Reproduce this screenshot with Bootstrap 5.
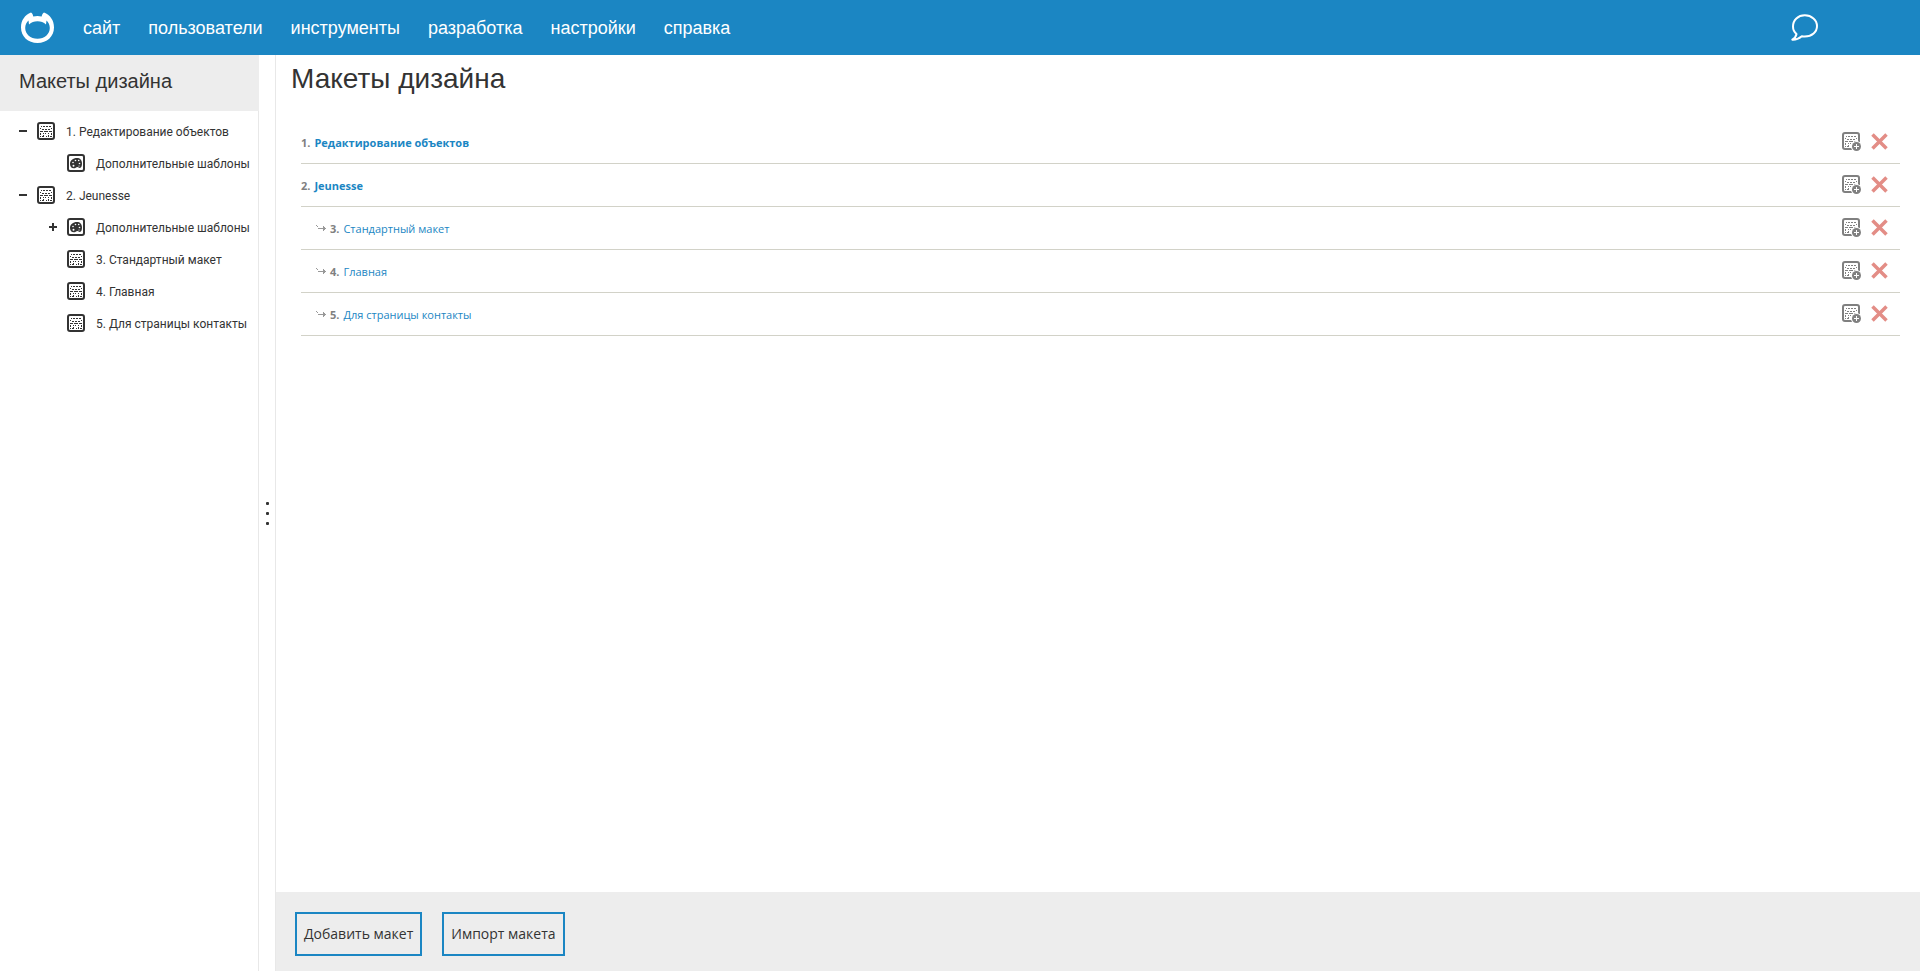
<!DOCTYPE html>
<html lang="ru">
<head>
<meta charset="utf-8">
<meta name="viewport" content="width=device-width, initial-scale=1">
<title>Макеты дизайна</title>
<link rel="stylesheet" href="https://cdn.jsdelivr.net/npm/bootstrap@5.3.0/dist/css/bootstrap.min.css">
<style>
  :root { --brand: #1b86c3; --ink: #333; --panel: #ededed; }
  body { font-family: "Liberation Sans", Arial, sans-serif; color: var(--ink); }
  a { text-decoration: none; }
  svg { display: block; flex-shrink: 0; }
  .topbar { background: var(--brand); height: 55px; padding: 0 101px 0 20px; }
  .topbar .nav { gap: 28px; margin-left: 28px; }
  .topbar .nav-link { color: #fff; font-size: 18px; line-height: 24px; padding: 0; }
  .side { width: 259px; border-right: 1px solid #e8e8e8; }
  .side-title { background: var(--panel); height: 56px; margin-right: -1px; padding: 14px 19px; font-size: 20px; line-height: 24px; }
  .tree { padding-top: 4px; font-family: Roboto, sans-serif; font-size: 12px; line-height: 16px; }
  .tree .node { height: 32px; padding-left: 19px; white-space: nowrap; }
  .tree ul .node { padding-left: 49px; }
  .tree a { color: var(--ink); gap: 11px; }
  .tree a span { padding-top: 1px; }
  .toggle { width: 18px; height: 18px; flex-shrink: 0; padding: 0; border: 0; background: none; color: var(--ink); }
  .splitter { width: 17px; border-right: 1px solid #e8e8e8; gap: 7px; }
  .splitter span { width: 3px; height: 3px; border-radius: 1px; background: var(--ink); }
  .page-title { font-size: 28px; line-height: 32px; padding: 8px 15px 0; margin: 0 0 26px; }
  .layouts { margin: 0 20px 0 25px; font-family: "Open Sans", sans-serif; font-size: 11px; line-height: 16px; }
  .layouts li { height: 43px; border-bottom: 1px solid #d2d2c8; padding-right: 12px; }
  .layouts a { color: var(--brand); padding-top: 2px; }
  .layouts .num { color: #808080; font-weight: 700; padding-top: 2px; }
  .layouts .top-level a { font-weight: 700; }
  .layouts .child { padding-left: 15px; }
  .tool { padding: 0 0 1px; border: 0; background: none; }
  .tool-add { margin: 0 6px 0 auto; }
  .actions { background: var(--panel); height: 79px; gap: 20px; padding: 20px 19px 0; }
  .actions .btn { height: 44px; border: 2px solid var(--brand); border-radius: 0; padding: 0 7px; color: var(--ink); font-family: "Open Sans", sans-serif; font-size: 14px; line-height: 20px; }
</style>
</head>
<body class="vh-100 d-flex flex-column">

<svg width="0" height="0" class="position-absolute" aria-hidden="true">
  <symbol id="i-layout" viewBox="0 0 18 18">
    <rect x="1" y="1" width="16" height="16" rx="2" fill="none" stroke="currentColor" stroke-width="2"/>
    <path d="M4 4.500h1M6 4.500h2M9 4.500h2M12 4.500h2M3 6.500h1M5 7.500h2M8 7.500h2M11 7.500h2M14 6.500h1M3 9.500h3M7 9.500h4M12 9.500h3M3.500 11v2M3.500 14v1M6.500 11v1M6.500 13v2M8.500 11v1M11.500 11v1M11.500 13v2M14.500 11v2M14.500 14v1M5 14.500h1M9 14.500h1M13 14.500h1" fill="none" stroke="currentColor" shape-rendering="crispEdges"/>
  </symbol>
  <symbol id="i-palette" viewBox="0 0 18 18">
    <rect x="1" y="1" width="16" height="16" rx="2" fill="none" stroke="currentColor" stroke-width="2"/>
    <path d="M10 4C6 4 3 6.500 3 10c0 3 2 4.500 4.500 4.200 1.500-.2 1.500-1.200 3-1.200 1 0 1.300 1 2.300 1C14.500 14 15 11.500 15 9.500 15 6 13 4 10 4z" fill="currentColor"/>
    <g fill="#fff"><circle cx="6" cy="8.500" r=".8"/><circle cx="8.500" cy="6.500" r=".8"/><circle cx="11.700" cy="6.500" r=".8"/><circle cx="12.500" cy="9.500" r=".8"/><circle cx="6.500" cy="11.700" r="1"/><circle cx="12" cy="12" r=".6"/></g>
  </symbol>
  <symbol id="i-minus" viewBox="0 0 18 18"><path d="M0 8h8v2H0z" fill="currentColor"/></symbol>
  <symbol id="i-plus" viewBox="0 0 18 18"><path d="M0 8h3V5h2v3h3v2H5v3H3v-3H0z" fill="currentColor"/></symbol>
  <symbol id="i-add" viewBox="0 0 19 19">
    <g color="#808080">
      <use href="#i-layout" width="18" height="18"/>
      <circle cx="14.500" cy="14.500" r="5.500" fill="#fff"/>
      <circle cx="14.500" cy="14.500" r="4.500" fill="#808080"/>
      <path d="M14.500 12v5M12 14.500h5" stroke="#fff" fill="none"/>
    </g>
  </symbol>
  <symbol id="i-del" viewBox="0 0 17 17"><path d="M1.500 1.500l14 14M15.500 1.500l-14 14" stroke="#e38d86" stroke-width="3.500" fill="none"/></symbol>
  <symbol id="i-child" viewBox="0 0 10 6"><path d="M0 .5h1M1 1.500h1M2 3.500h8M7.500 1v5M8.500 2v3" stroke="#999" fill="none"/></symbol>
</svg>

<header class="topbar d-flex align-items-center">
  <a href="#" aria-label="Главная">
    <svg width="35" height="32" viewBox="0 0 35 32"><path d="M11 .5C12.500 1.500 13 3 13.300 4.500 16 3.800 19 3.800 21.600 4.500 22 3 22.500 1.500 24 .5 30 3 34 8 34 15.500 34 24.500 27 31 17.500 31S1 24.500 1 15.500C1 8 5 3 11 .5z" fill="#fff"/><path d="M8.500 8.500C6.500 10.300 5.200 13 5.200 16 5.200 22 10.500 26.800 17.500 26.800S29.800 22 29.800 16C29.800 13 28.500 10.300 26.500 8.500L26 12.500C23.500 10 21 9.300 17.500 9.300S11.500 10 9 12.500z" fill="#1b86c3"/></svg>
  </a>
  <nav class="nav flex-nowrap">
    <a class="nav-link" href="#">сайт</a>
    <a class="nav-link" href="#">пользователи</a>
    <a class="nav-link" href="#">инструменты</a>
    <a class="nav-link" href="#">разработка</a>
    <a class="nav-link" href="#">настройки</a>
    <a class="nav-link" href="#">справка</a>
  </nav>
  <a class="ms-auto" href="#" aria-label="Сообщения">
    <svg width="28" height="28" viewBox="0 0 28 28"><path d="M5.500 20C3 18 2 15.500 2 12.500 2 6 7 1.300 13.800 1.300S26 6 26 12 21 22.500 13.800 22.500c-1 0-2 0-3-.3C8 24.500 5 26 1.300 25.700 3.500 24.500 5 22.500 5.500 20z" fill="none" stroke="#fff" stroke-width="2" stroke-linejoin="round"/></svg>
  </a>
</header>

<div class="d-flex flex-grow-1">
  <aside class="side flex-shrink-0">
    <div class="side-title">Макеты дизайна</div>
    <ul class="tree list-unstyled m-0">
      <li>
        <div class="node d-flex align-items-center"><button class="toggle" type="button" aria-label="Свернуть"><svg width="18" height="18"><use href="#i-minus"/></svg></button><a class="d-flex align-items-center" href="#"><svg width="18" height="18"><use href="#i-layout"/></svg><span>1. Редактирование объектов</span></a></div>
        <ul class="list-unstyled">
          <li class="node d-flex align-items-center"><span class="toggle"></span><a class="d-flex align-items-center" href="#"><svg width="18" height="18"><use href="#i-palette"/></svg><span>Дополнительные шаблоны</span></a></li>
        </ul>
      </li>
      <li>
        <div class="node d-flex align-items-center"><button class="toggle" type="button" aria-label="Свернуть"><svg width="18" height="18"><use href="#i-minus"/></svg></button><a class="d-flex align-items-center" href="#"><svg width="18" height="18"><use href="#i-layout"/></svg><span>2. Jeunesse</span></a></div>
        <ul class="list-unstyled">
          <li class="node d-flex align-items-center"><button class="toggle" type="button" aria-label="Развернуть"><svg width="18" height="18"><use href="#i-plus"/></svg></button><a class="d-flex align-items-center" href="#"><svg width="18" height="18"><use href="#i-palette"/></svg><span>Дополнительные шаблоны</span></a></li>
          <li class="node d-flex align-items-center"><span class="toggle"></span><a class="d-flex align-items-center" href="#"><svg width="18" height="18"><use href="#i-layout"/></svg><span>3. Стандартный макет</span></a></li>
          <li class="node d-flex align-items-center"><span class="toggle"></span><a class="d-flex align-items-center" href="#"><svg width="18" height="18"><use href="#i-layout"/></svg><span>4. Главная</span></a></li>
          <li class="node d-flex align-items-center"><span class="toggle"></span><a class="d-flex align-items-center" href="#"><svg width="18" height="18"><use href="#i-layout"/></svg><span>5. Для страницы контакты</span></a></li>
        </ul>
      </li>
    </ul>
  </aside>
  <div class="splitter d-flex flex-column align-items-center justify-content-center flex-shrink-0"><span></span><span></span><span></span></div>
  <main class="flex-grow-1 d-flex flex-column">
    <h1 class="page-title fw-normal">Макеты дизайна</h1>
    <ul class="layouts list-unstyled">
      <li class="top-level d-flex align-items-center gap-1"><span class="num">1.</span><a href="#">Редактирование объектов</a><button class="tool tool-add" type="button" aria-label="Добавить"><svg width="19" height="19"><use href="#i-add"/></svg></button><button class="tool" type="button" aria-label="Удалить"><svg width="17" height="17"><use href="#i-del"/></svg></button></li>
      <li class="top-level d-flex align-items-center gap-1"><span class="num">2.</span><a href="#">Jeunesse</a><button class="tool tool-add" type="button" aria-label="Добавить"><svg width="19" height="19"><use href="#i-add"/></svg></button><button class="tool" type="button" aria-label="Удалить"><svg width="17" height="17"><use href="#i-del"/></svg></button></li>
      <li class="child d-flex align-items-center gap-1"><svg width="10" height="6"><use href="#i-child"/></svg><span class="num">3.</span><a href="#">Стандартный макет</a><button class="tool tool-add" type="button" aria-label="Добавить"><svg width="19" height="19"><use href="#i-add"/></svg></button><button class="tool" type="button" aria-label="Удалить"><svg width="17" height="17"><use href="#i-del"/></svg></button></li>
      <li class="child d-flex align-items-center gap-1"><svg width="10" height="6"><use href="#i-child"/></svg><span class="num">4.</span><a href="#">Главная</a><button class="tool tool-add" type="button" aria-label="Добавить"><svg width="19" height="19"><use href="#i-add"/></svg></button><button class="tool" type="button" aria-label="Удалить"><svg width="17" height="17"><use href="#i-del"/></svg></button></li>
      <li class="child d-flex align-items-center gap-1"><svg width="10" height="6"><use href="#i-child"/></svg><span class="num">5.</span><a href="#">Для страницы контакты</a><button class="tool tool-add" type="button" aria-label="Добавить"><svg width="19" height="19"><use href="#i-add"/></svg></button><button class="tool" type="button" aria-label="Удалить"><svg width="17" height="17"><use href="#i-del"/></svg></button></li>
    </ul>
    <div class="actions d-flex align-items-start mt-auto">
      <button class="btn" type="button">Добавить макет</button>
      <button class="btn" type="button">Импорт макета</button>
    </div>
  </main>
</div>
<script src="https://cdn.jsdelivr.net/npm/bootstrap@5.3.0/dist/js/bootstrap.bundle.min.js"></script>
</body>
</html>
